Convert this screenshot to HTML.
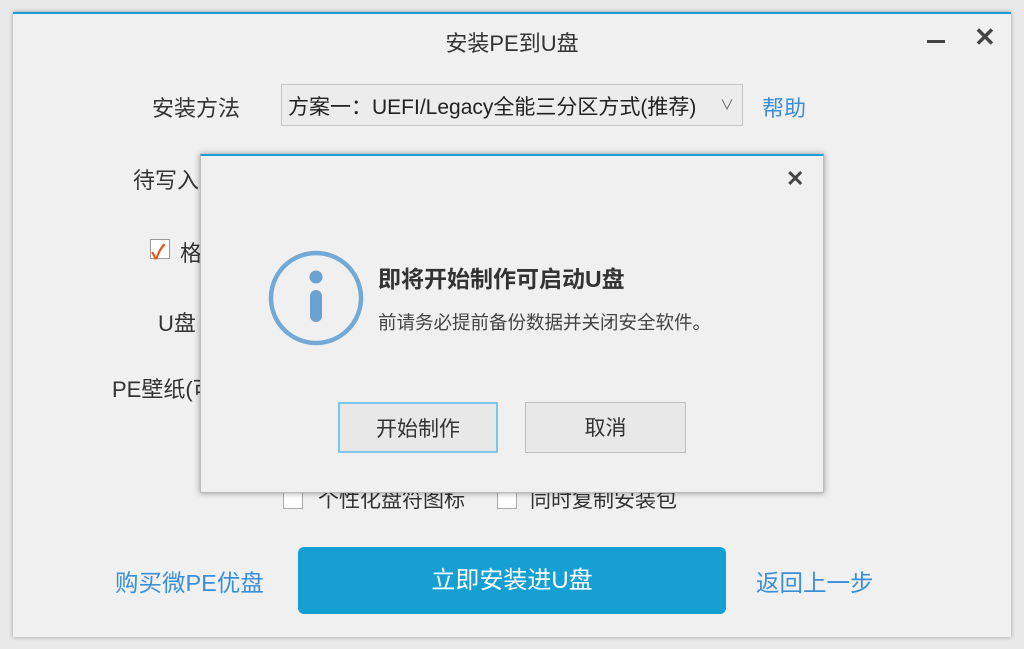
<!DOCTYPE html>
<html><head><meta charset="utf-8"><style>
body{margin:0;width:1024px;height:649px;background:#e9e9e9;position:relative;overflow:hidden;font-family:"Liberation Sans","Noto Sans CJK SC",sans-serif;color:#333}
.a{position:absolute;white-space:nowrap}
#win{position:absolute;left:13px;top:12px;width:998px;height:623px;background:#f0f0f0;border-top:2px solid #1a9fd4;box-shadow:0 0 4px rgba(0,0,0,.35)}
.lbl{font-size:22px;color:#333}
.blue{color:#3b8fd8}
.cb{position:absolute;width:18px;height:18px;border:1px solid #aaa;background:#fff}
#dlg{position:absolute;left:200px;top:154px;width:624px;height:339px;background:#f0f0f0;border-top:2px solid #1a9fd4;box-shadow:0 0 6px rgba(0,0,0,.4);box-sizing:border-box;border-left:1px solid #bbb;border-right:1px solid #bbb;border-bottom:1px solid #bbb}
.btn{position:absolute;height:51px;background:#e8e8e8;border:1px solid #bdbdbd;text-align:center;line-height:51px;font-size:21px;color:#333;box-sizing:border-box}
</style></head><body>
<div id="win"></div>
<div class="a" style="left:0;width:1024px;top:26px;text-align:center;font-size:22px;color:#333">安装PE到U盘</div>
<div class="a" style="left:927px;top:40px;width:18px;height:3px;background:#444"></div>
<div class="a" style="left:974px;top:22px;font-size:26px;color:#444;font-weight:bold">✕</div>
<div class="a lbl" style="left:152px;top:91px">安装方法</div>
<div class="a" style="left:281px;top:84px;width:462px;height:42px;border:1px solid #c5c5c5;background:#ececec;box-sizing:border-box"></div>
<div class="a" style="left:288px;top:91px;font-size:21px;color:#222">方案一：UEFI/Legacy全能三分区方式(推荐)</div>
<div class="a" style="left:720px;top:95px;font-size:14px;color:#666">∨</div>
<div class="a lbl blue" style="left:762px;top:91px">帮助</div>
<div class="a lbl" style="left:133px;top:163px">待写入</div>
<div class="cb" style="left:150px;top:239px;border-color:#999"></div>
<div class="a" style="left:151px;top:236px;font-size:20px;color:#e9541a;font-weight:bold">✓</div>
<div class="a lbl" style="left:180px;top:236px">格</div>
<div class="a lbl" style="left:158px;top:306px">U盘</div>
<div class="a lbl" style="left:112px;top:372px">PE壁纸(可</div>
<div class="cb" style="left:283px;top:489px"></div>
<div class="a" style="left:318px;top:484px;font-size:21px">个性化盘符图标</div>
<div class="cb" style="left:497px;top:489px"></div>
<div class="a" style="left:530px;top:484px;font-size:21px">同时复制安装包</div>
<div class="a blue" style="left:115px;top:564px;font-size:23.5px">购买微PE优盘</div>
<div class="a" style="left:298px;top:547px;width:428px;height:67px;background:#169fd3;border-radius:6px;color:#fff;text-align:center;line-height:67px;font-size:24px">立即安装进U盘</div>
<div class="a blue" style="left:756px;top:564px;font-size:23.5px">返回上一步</div>
<div id="dlg"></div>
<div class="a" style="left:786px;top:166px;font-size:22px;color:#444;font-weight:bold">✕</div>
<svg class="a" style="left:260px;top:245px" width="110" height="110"><circle cx="56" cy="53" r="45" fill="none" stroke="#73a9d6" stroke-width="4.5"/><circle cx="56" cy="32" r="6.5" fill="#6aa1d1"/><rect x="50" y="45" width="12" height="32" rx="6" fill="#6aa1d1"/></svg>
<div class="a" style="left:378px;top:260px;font-size:23px;font-weight:bold;color:#333">即将开始制作可启动U盘</div>
<div class="a" style="left:378px;top:309px;font-size:18.5px;color:#444">前请务必提前备份数据并关闭安全软件。</div>
<div class="btn" style="left:338px;top:402px;width:160px;border:2px solid #7cc6ea">开始制作</div>
<div class="btn" style="left:525px;top:402px;width:161px">取消</div>
</body></html>
